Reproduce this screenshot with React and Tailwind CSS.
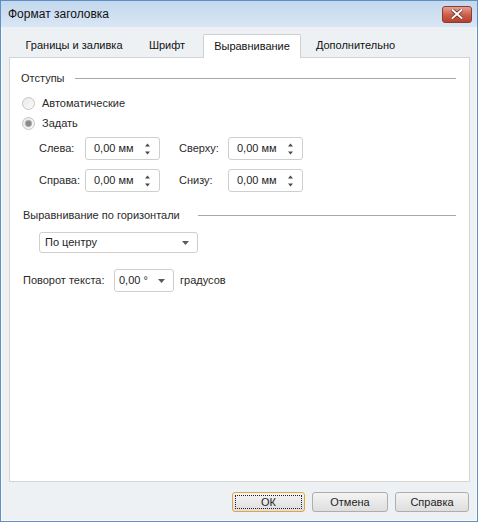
import React, { useState } from "react";

const FONT = { fontFamily: '"Liberation Sans", "Noto Sans", sans-serif' };

// --- small drawings ---
const SpinArrows = () => (
  <svg width="7" height="14" viewBox="0 0 7 14" className="shrink-0">
    <path d="M3.5 1.5 L6 4.5 L1 4.5 Z" fill="#4a4a4a" />
    <path d="M3.5 12.5 L6 9.5 L1 9.5 Z" fill="#4a4a4a" />
  </svg>
);

const Caret = () => (
  <svg width="7" height="4" viewBox="0 0 7 4" className="shrink-0">
    <path d="M0 0 L7 0 L3.5 4 Z" fill="#5a5a5a" />
  </svg>
);

const Radio = ({ checked }) => (
  <svg width="13" height="13" viewBox="0 0 13 13" className="shrink-0">
    <defs>
      <linearGradient id={checked ? "rg1" : "rg0"} x1="0" y1="0" x2="1" y2="1">
        <stop offset="0" stopColor="#e9e9e9" />
        <stop offset="1" stopColor="#fafafa" />
      </linearGradient>
    </defs>
    <circle cx="6.5" cy="6.5" r="6" fill={`url(#${checked ? "rg1" : "rg0"})`} stroke="#c4c4c4" />
    {checked && <circle cx="6.5" cy="6.5" r="3.2" fill="#8a8a8a" stroke="#b0b0b0" strokeWidth="0.8" />}
  </svg>
);

const SpinInput = ({ value }) => (
  <div className="w-[75px] h-[23px] bg-white border border-[#cfcfcf] rounded-[3px] flex items-center justify-between pl-[8px] pr-[8px]">
    <span className="text-[11px] text-[#1e1e1e] whitespace-nowrap">{value}</span>
    <SpinArrows />
  </div>
);

const SectionHeader = ({ title, gap, className = "" }) => (
  <div className={`flex items-center h-[16px] pr-[13px] ${className}`}>
    <span className={`text-[11px] text-[#2a2a2a] whitespace-nowrap ${gap}`}>{title}</span>
    <div className="flex-1 h-px bg-[#a7a7a7]" />
  </div>
);

const DialogButton = ({ children, focused, width }) => (
  <button
    className={`${width} h-[20px] rounded-[3px] border text-[11px] text-[#1e1e1e] bg-gradient-to-b from-[#f4f4f4] to-[#dedede] flex items-center justify-center ${
      focused ? "border-[#e0a446] p-[2px]" : "border-[#adadad]"
    }`}
  >
    {focused ? (
      <span className="w-full h-full border border-dotted border-[#222] flex items-center justify-center">
        {children}
      </span>
    ) : (
      children
    )}
  </button>
);

export default function App() {
  const [tab, setTab] = useState("align");
  const [mode, setMode] = useState("set");

  const tabs = [
    { id: "borders", label: "Границы и заливка", cls: "w-[124px] ml-[3px]" },
    { id: "font", label: "Шрифт", cls: "w-[62px]" },
    { id: "align", label: "Выравнивание", cls: "w-[98px] ml-[5px]" },
    { id: "more", label: "Дополнительно", cls: "w-[109px]" },
  ];

  return (
    <div style={FONT} className="w-[478px] h-[522px] border border-[#5f8fc3] bg-[#eef1f4] flex flex-col select-none">
      {/* Title bar */}
      <div className="h-[26px] shrink-0 bg-gradient-to-b from-[#c3d8ee] to-[#d9e6f4] flex items-center justify-between pl-[7px] pr-[5px]">
        <span className="text-[12px] text-[#111]">Формат заголовка</span>
        <button className="w-[30px] h-[17px] rounded-[3px] border border-[#8d3a2f] bg-gradient-to-b from-[#e3a196] via-[#cf5f4c] to-[#b8402c] flex items-center justify-center">
          <svg width="12" height="10" viewBox="0 0 12 10">
            <path d="M1.5 1 L10.5 9 M10.5 1 L1.5 9" stroke="#5a2a22" strokeWidth="3.4" strokeLinecap="square" />
            <path d="M1.5 1 L10.5 9 M10.5 1 L1.5 9" stroke="#ffffff" strokeWidth="2" strokeLinecap="square" />
          </svg>
        </button>
      </div>

      {/* Body */}
      <div className="flex-1 flex flex-col pt-[7px] pl-[7px] pr-[6px] border-x border-b border-[#f7f9fb]">
        {/* Tabs */}
        <div className="h-[23px] flex items-end shrink-0">
          {tabs.map((t) =>
            t.id === tab ? (
              <div
                key={t.id}
                className={`${t.cls} h-[24px] -mb-px relative z-10 bg-white border border-b-0 border-[#cfcfcf] rounded-t-[2px] flex items-center justify-center text-[11px] text-[#111] whitespace-nowrap`}
              >
                {t.label}
              </div>
            ) : (
              <button
                key={t.id}
                onClick={() => setTab(t.id)}
                className={`${t.cls} h-[23px] flex items-center justify-center text-[11px] text-[#111] whitespace-nowrap`}
              >
                {t.label}
              </button>
            )
          )}
        </div>

        {/* Panel */}
        <div className="flex-1 bg-white border border-[#d4d4d4] flex flex-col pl-[11px]">
          <SectionHeader title="Отступы" gap="mr-[10px]" className="mt-[12px]" />

          <label className="mt-[9px] h-[16px] flex items-center gap-[7px] ml-[1px]" onClick={() => setMode("auto")}>
            <Radio checked={mode === "auto"} />
            <span className="text-[11px] text-[#2a2a2a]">Автоматические</span>
          </label>
          <label className="mt-[4px] h-[16px] flex items-center gap-[7px] ml-[1px]" onClick={() => setMode("set")}>
            <Radio checked={mode === "set"} />
            <span className="text-[11px] text-[#2a2a2a]">Задать</span>
          </label>

          <div className="mt-[6px] ml-[18px] flex items-center">
            <span className="w-[46px] shrink-0 text-[11px] text-[#2a2a2a] whitespace-nowrap">Слева:</span>
            <SpinInput value="0,00 мм" />
            <span className="w-[49px] shrink-0 ml-[19px] text-[11px] text-[#2a2a2a] whitespace-nowrap">Сверху:</span>
            <SpinInput value="0,00 мм" />
          </div>
          <div className="mt-[9px] ml-[18px] flex items-center">
            <span className="w-[46px] shrink-0 text-[11px] text-[#2a2a2a] whitespace-nowrap">Справа:</span>
            <SpinInput value="0,00 мм" />
            <span className="w-[49px] shrink-0 ml-[19px] text-[11px] text-[#2a2a2a] whitespace-nowrap">Снизу:</span>
            <SpinInput value="0,00 мм" />
          </div>

          <SectionHeader title="Выравнивание по горизонтали" gap="mr-[18px]" className="mt-[15px] ml-[2px]" />

          <div className="mt-[9px] ml-[18px] w-[159px] h-[21px] bg-white border border-[#cfcfcf] rounded-[3px] flex items-center justify-between pl-[5px] pr-[8px]">
            <span className="text-[11px] text-[#1e1e1e]">По центру</span>
            <Caret />
          </div>

          <div className="mt-[16px] ml-[2px] flex items-center">
            <span className="w-[91px] shrink-0 text-[11px] text-[#2a2a2a] whitespace-nowrap">Поворот текста:</span>
            <div className="w-[60px] h-[23px] bg-white border border-[#cfcfcf] rounded-[3px] flex items-center justify-between pl-[4px] pr-[8px]">
              <span className="text-[11px] text-[#1e1e1e] whitespace-nowrap">0,00 °</span>
              <Caret />
            </div>
            <span className="ml-[6px] text-[11px] text-[#2a2a2a]">градусов</span>
          </div>
        </div>

        {/* Buttons */}
        <div className="mt-[10px] mb-[8px] flex justify-end gap-[7px] pr-[1px]">
          <DialogButton focused width="w-[73px]">
            <span>ОК</span>
          </DialogButton>
          <DialogButton width="w-[76px]">Отмена</DialogButton>
          <DialogButton width="w-[74px]">Справка</DialogButton>
        </div>
      </div>
    </div>
  );
}
